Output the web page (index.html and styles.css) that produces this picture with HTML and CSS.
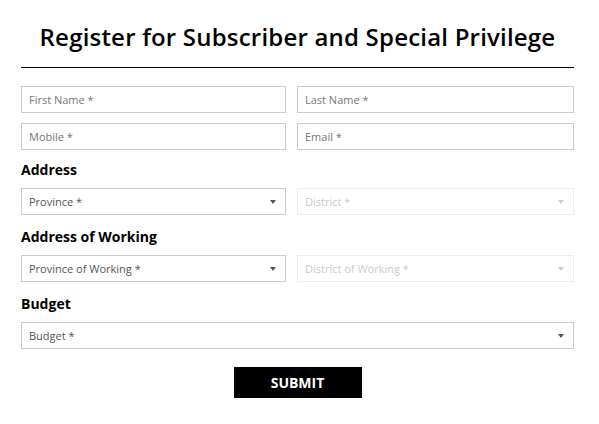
FILE: index.html
```
<!DOCTYPE html>
<html>
    <head>
        <meta charset="utf-8">
        <title>Register for Subscriber and Special Privilege</title>
        <link rel="stylesheet" href="styles.css">
    </head>
    <body>
        <div class="wrap">
            <h1>Register for Subscriber and Special Privilege</h1>
            <form action="/register" method="post">
                <div class="row">
                    <div class="cell left"><input type="text" class="field" placeholder="First Name *"></div>
                    <div class="cell"><input type="text" class="field" placeholder="Last Name *"></div>
                </div>
                <div class="row">
                    <div class="cell left"><input type="text" class="field" placeholder="Mobile *"></div>
                    <div class="cell"><input type="text" class="field" placeholder="Email *"></div>
                </div>

                <div class="label first">Address</div>
                <div class="row">
                    <div class="cell left"><div class="field select">Province *<span class="caret"></span></div></div>
                    <div class="cell"><div class="field select off">District *<span class="caret"></span></div></div>
                </div>

                <div class="label">Address of Working</div>
                <div class="row">
                    <div class="cell left"><div class="field select">Province of Working *<span class="caret"></span></div></div>
                    <div class="cell"><div class="field select off">District of Working *<span class="caret"></span></div></div>
                </div>

                <div class="label">Budget</div>
                <div class="field select">Budget *<span class="caret"></span></div>

                <div class="actions">
                    <button type="submit" class="submit">SUBMIT</button>
                </div>
            </form>
        </div>
    </body>
</html>
```

FILE: styles.css
```
body{margin:0;background:#fff;font-family:"Open Sans","Noto Sans",sans-serif;color:#000;}
.wrap{width:553px;margin-left:21px;}
h1{margin:0;padding:21px 0 14px;line-height:32px;font-size:24px;font-weight:600;letter-spacing:0.2px;text-align:center;border-bottom:1px solid #000;}
form{margin-top:18px;}
.row{display:grid;grid-template-columns:276px 277px;margin-bottom:10px;}
.left{padding-right:11px;}
.field{display:flex;align-items:center;position:relative;box-sizing:border-box;width:100%;height:27px;margin:0;padding:0 7px;border:1px solid #ccc;background:#fff;font-family:inherit;font-size:11px;color:#555;outline:none;}
.field::placeholder{color:#777;}
.select .caret{position:absolute;right:9px;top:11px;border-left:3.5px solid transparent;border-right:3.5px solid transparent;border-top:4px solid #555;}
.off{border-color:#eee;color:#ccc;}
.off .caret{border-top-color:#ccc;}
.label{margin:12px 0 8px;line-height:20px;font-size:14px;font-weight:700;}
.label.first{margin-top:0;}
.actions{display:flex;justify-content:center;margin-top:18px;}
.submit{width:128px;height:31px;border:0;background:#000;color:#fff;font-family:inherit;font-size:14px;font-weight:700;}
```
